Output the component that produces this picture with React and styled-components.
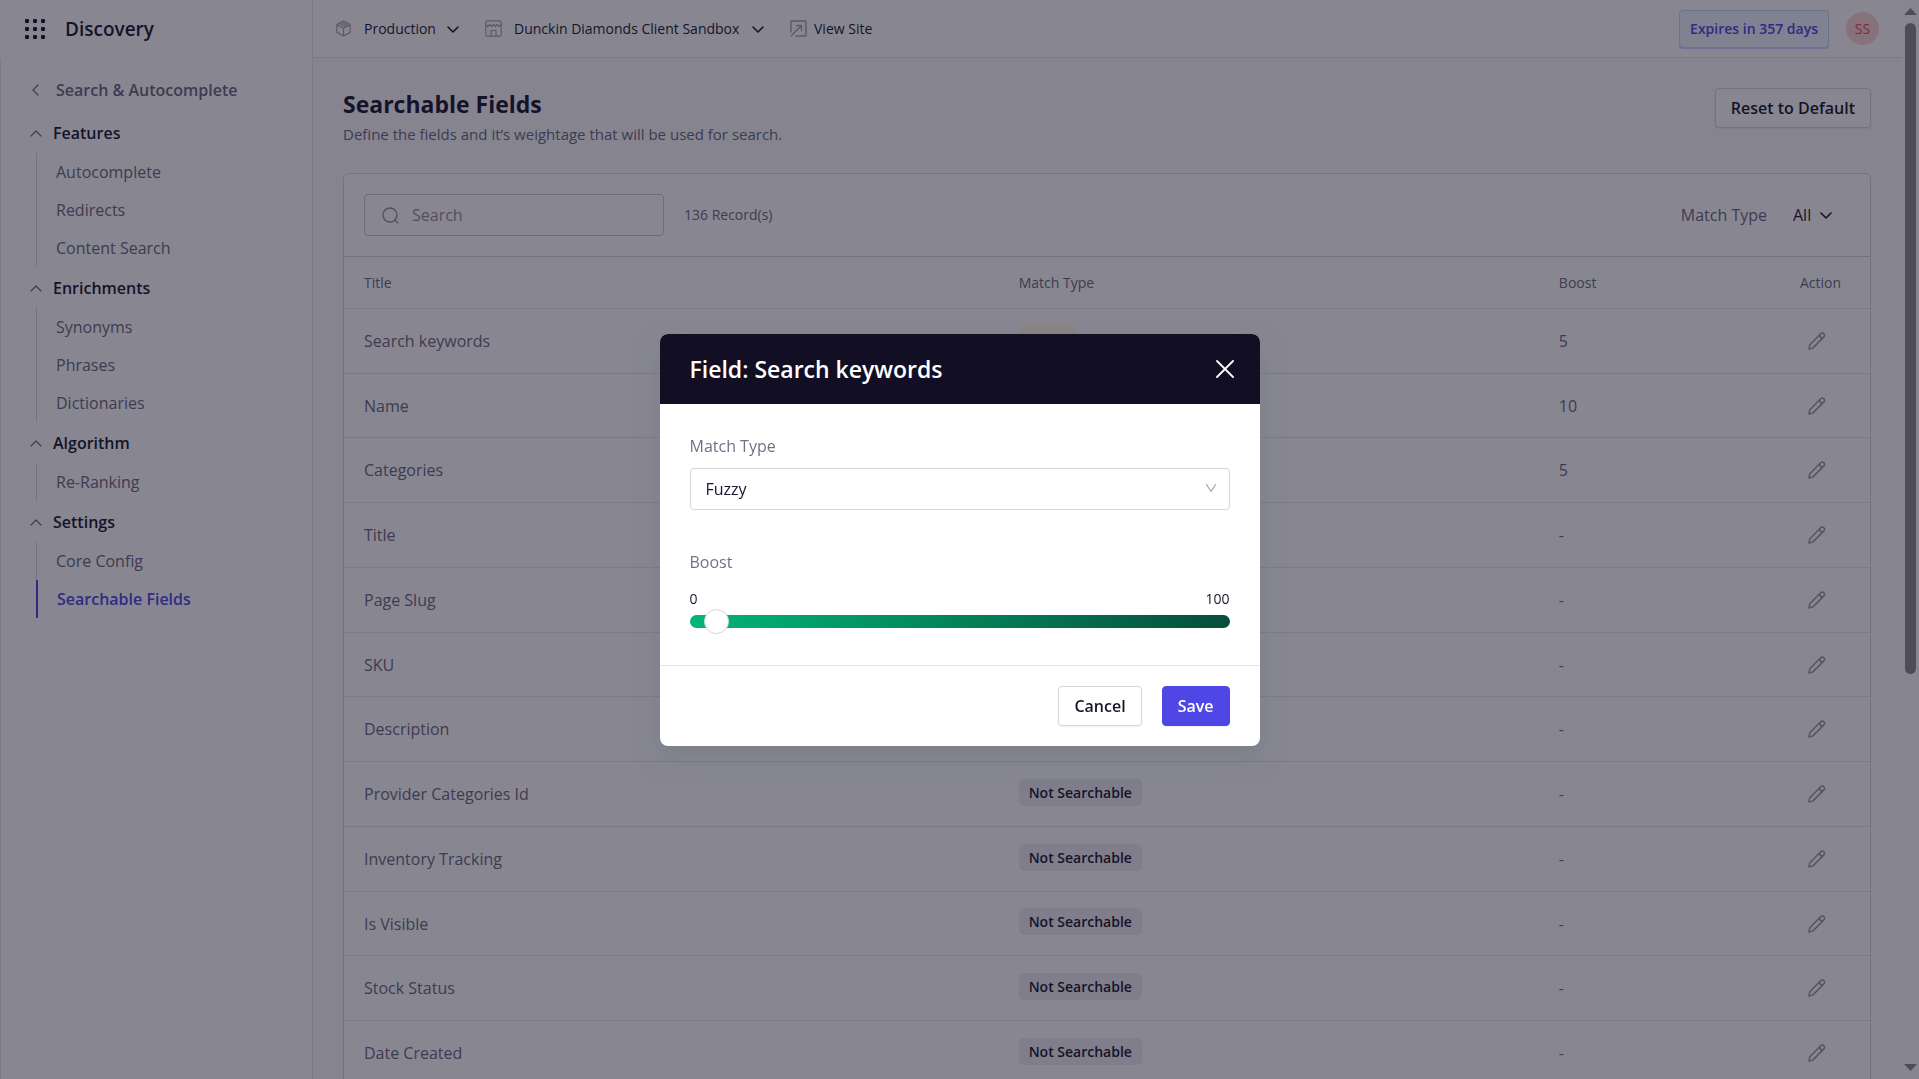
import React, { useState } from "react";
import styled, { createGlobalStyle, css } from "styled-components";

const color = {
  ink: "#19152f",
  muted: "#6a6780",
  icon: "#a5a3b3",
  line: "#e7e5ee",
  border: "#d6d4df",
  brand: "#4f46e5",
  navy: "#120f24",
};

const GlobalStyle = createGlobalStyle`
  * { box-sizing: border-box; }
  body {
    margin: 0;
    overflow: hidden;
    color: ${color.ink};
    font-family: "Segoe UI", "Open Sans", "Noto Sans", sans-serif;
    font-size: 16px;
    line-height: 24px;
  }
  button, input, select { font: inherit; color: inherit; }
  h1, h2, p, ul { margin: 0; padding: 0; }
  ul { list-style: none; }
  a { color: inherit; text-decoration: none; }
  svg { display: block; flex: none; }
`;

const Page = styled.div`
  display: flex;
  height: 100vh;
  background: #fff;
`;

/* ---------- icons ---------- */

const Stroke = styled.svg.attrs({ fill: "none", stroke: "currentColor", strokeLinecap: "round", strokeLinejoin: "round" })`
  color: ${(p) => p.$color || "inherit"};
`;

const GridIcon = () => (
  <svg width="20" height="20" viewBox="0 0 20 20" fill="currentColor" aria-hidden="true">
    {[0, 8, 16].map((y) => [0, 8, 16].map((x) => (
      <rect key={`${x}-${y}`} x={x} y={y} width="4" height="4" rx="1" />
    )))}
  </svg>
);

const arrows = {
  down: "M1 4l5 5 5-5",
  up: "M1 9l5-5 5 5",
  left: "M8 1L3 6l5 5",
  deep: "M1.5 1.500l4.500 7 4.500-7",
};
const Arrow = ({ dir = "down", tone, weight = 1.5 }) => (
  <Stroke width="12" height="12" viewBox="0 0 12 12" strokeWidth={weight} $color={tone} aria-hidden="true">
    <path d={arrows[dir]} />
  </Stroke>
);

const BoxIcon = () => (
  <Stroke width="17" height="17" viewBox="0 0 17 17" strokeWidth="1.2" $color={color.icon} aria-hidden="true">
    <path d="M8.5 1l6.7 3.6v7.8L8.5 16l-6.7-3.6V4.6zM1.8 4.6l6.7 3.6 6.7-3.6M8.5 8.2V16M4.4 3.2l6.7 3.6M6.5 2.1l6.7 3.6" />
  </Stroke>
);

const StoreIcon = () => (
  <Stroke width="17" height="17" viewBox="0 0 17 17" strokeWidth="1.2" $color={color.icon} aria-hidden="true">
    <rect x="0.8" y="0.8" width="15.4" height="15.4" rx="1.5" />
    <path d="M0.8 4.5l2 2 2-2 1.8 2 1.9-2 1.9 2 1.8-2 2 2 2-2M6 16v-5.5h5V16" />
  </Stroke>
);

const ExternalIcon = () => (
  <Stroke width="17" height="17" viewBox="0 0 17 17" strokeWidth="1.4" $color={color.icon} aria-hidden="true">
    <path d="M1 12V1h15v15H6M1.2 15.8L11.5 5.5M6.5 5.5h5v5" />
  </Stroke>
);

const SearchIcon = () => (
  <Stroke width="17" height="17" viewBox="0 0 17 17" strokeWidth="1.3" $color="#8f8ca0" aria-hidden="true">
    <circle cx="8" cy="8" r="7" />
    <path d="M13 13l2.6 2.8" />
  </Stroke>
);

const PencilIcon = () => (
  <Stroke width="18" height="18" viewBox="0 0 18 18" strokeWidth="1.5" $color="#9896a7" aria-hidden="true">
    <path d="M1 17l0.7-4L12.6 1.8a2.1 2.1 0 0 1 3.3 0 2.1 2.1 0 0 1 0 3.1L5 15.9zM11.9 3.1a2.4 2.4 0 0 0 2.9 2.9" />
  </Stroke>
);

const CloseIcon = () => (
  <Stroke width="18" height="18" viewBox="0 0 18 18" strokeWidth="1.8" aria-hidden="true">
    <path d="M1 1l16 16M17 1L1 17" />
  </Stroke>
);

/* ---------- shared controls ---------- */

const SelectWrap = styled.span`
  display: inline-grid;
  align-items: center;
  > * { grid-area: 1 / 1; }
  > svg { justify-self: end; pointer-events: none; margin-right: ${(p) => (p.$boxed ? 13 : 0)}px; }
`;

const NativeSelect = styled.select`
  appearance: none;
  border: 0;
  margin: 0;
  background: transparent;
  padding: 0 ${(p) => p.$room || 22}px 0 0;
  font-size: ${(p) => p.$size || 16}px;
  line-height: 24px;
  ${(p) => p.$boxed && css`
    width: 100%;
    height: 42px;
    padding: 0 40px 0 15px;
    border: 1px solid ${color.border};
    border-radius: 4px;
    background: #fff;
  `}
`;

const Button = styled.button`
  height: 40px;
  padding: 0 15px;
  font-weight: 600;
  line-height: 24px;
  border-radius: 4px;
  border: 1px solid ${(p) => (p.$primary ? color.brand : color.border)};
  background: ${(p) => (p.$primary ? color.brand : "#fff")};
  color: ${(p) => (p.$primary ? "#fff" : color.ink)};
  box-shadow: 0 1px 2px rgba(0, 0, 0, 0.06);
  white-space: nowrap;
`;

const IconButton = styled.button`
  display: inline-flex;
  padding: ${(p) => p.$pad || 0}px;
  border: 0;
  background: none;
  color: inherit;
`;

/* ---------- sidebar ---------- */

const Sidebar = styled.aside`
  display: flex;
  flex-direction: column;
  flex: none;
  width: 313px;
  border-right: 1px solid ${color.line};
`;

const Brand = styled.div`
  display: flex;
  align-items: center;
  gap: 20px;
  height: 58px;
  padding-left: 25px;
  font-size: 19px;
  font-weight: 600;
`;

const Nav = styled.nav`
  flex: 1;
  padding: 20px 0 0 29px;
  border-left: 1px solid ${color.line};
`;

const BackLink = styled.a`
  display: flex;
  align-items: center;
  gap: 14px;
  height: 24px;
  margin-bottom: 10px;
  font-weight: 600;
  color: ${color.muted};
`;

const GroupTitle = styled.button`
  display: flex;
  align-items: center;
  gap: 11px;
  height: 41px;
  padding: 0;
  border: 0;
  background: none;
  font-weight: 600;
  > svg { color: ${color.muted}; }
`;

const Group = styled.ul`
  margin-left: 6px;
`;

const NavItem = styled.a`
  display: flex;
  align-items: center;
  height: 38px;
  padding-left: 19px;
  border-left: 1px solid ${color.border};
  color: ${color.muted};
  ${(p) => p.$active && css`
    border-left: 2px solid ${color.brand};
    color: ${color.brand};
    font-weight: 600;
  `}
`;

/* ---------- main ---------- */

const Main = styled.main`
  display: flex;
  flex-direction: column;
  flex: 1;
  min-width: 0;
  background: #fafafa;
`;

const TopBar = styled.header`
  display: flex;
  align-items: center;
  justify-content: space-between;
  height: 58px;
  padding: 0 23px 0 22px;
  background: #fff;
  border-bottom: 1px solid ${color.line};
  flex: none;
`;

const TopGroup = styled.div`
  display: flex;
  align-items: center;
  gap: ${(p) => p.$gap}px;
  font-size: 14px;
`;

const TopLabel = styled.label`
  display: flex;
  align-items: center;
  gap: 12px;
`;

const TopLink = styled.a`
  display: flex;
  align-items: center;
  gap: 7px;
`;

const Expires = styled.button`
  height: 38px;
  padding: 0 10px;
  border: 1px solid #c7d2fe;
  border-radius: 4px;
  background: #eef2ff;
  box-shadow: 0 1px 0 #c7d2fe;
  color: ${color.brand};
  font-size: 14px;
  font-weight: 600;
`;

const Avatar = styled.button`
  width: 33px;
  height: 33px;
  padding: 0;
  border: 0;
  border-radius: 50%;
  background: #fdd4d4;
  color: #ef4458;
  font-size: 14px;
`;

const Content = styled.div`
  flex: 1;
  min-height: 0;
  overflow: hidden;
  padding: 30px 31px 0 30px;
`;

const Heading = styled.div`
  display: flex;
  align-items: flex-start;
  justify-content: space-between;
  margin-bottom: 28px;
  h1 { font-size: 23px; line-height: 32px; font-weight: 700; }
  p { margin-top: 3px; font-size: 15px; line-height: 22px; color: ${color.muted}; }
`;

const Card = styled.section`
  background: #fff;
  border: 1px solid ${color.border};
  border-radius: 6px;
`;

const Toolbar = styled.div`
  display: flex;
  align-items: center;
  gap: 20px;
  padding: 20px 38px 20px 20px;
  border-bottom: 1px solid ${color.border};
`;

const SearchBox = styled.label`
  display: flex;
  align-items: center;
  gap: 13px;
  width: 300px;
  height: 42px;
  padding: 0 17px;
  border: 1px solid #c9c7d3;
  border-radius: 4px;
  input {
    flex: 1;
    min-width: 0;
    padding: 0;
    border: 0;
    outline: 0;
    background: none;
  }
  input::placeholder { color: #918ea2; opacity: 1; }
`;

const Count = styled.span`
  font-size: 14px;
  color: ${color.muted};
`;

const Filter = styled.label`
  display: flex;
  align-items: center;
  gap: 26px;
  margin-left: auto;
  color: ${color.muted};
  select, svg { color: ${color.ink}; }
`;

const Table = styled.table`
  width: 100%;
  table-layout: fixed;
  border-collapse: separate;
  border-spacing: 0;
  color: ${color.muted};
  th, td {
    padding: 0 0 0 20px;
    border-bottom: 1px solid ${color.line};
    text-align: left;
    vertical-align: middle;
  }
  th { height: 52px; font-size: 14px; font-weight: 400; }
`;

const Col = styled.col`
  width: ${(p) => p.$width};
`;

const Row = styled.tr`
  td { height: 65px; }
  &:nth-child(4n + 2) td { height: 64px; }
`;

const badgeTones = {
  Fuzzy: { bg: "#fefae0", fg: "#d9650a" },
  "Not Searchable": { bg: "#efedf3", fg: color.ink },
};

const Badge = styled.span`
  display: inline-block;
  margin-bottom: 4px;
  padding: 2px 10px;
  border-radius: 5px;
  font-size: 14px;
  line-height: 23px;
  font-weight: 600;
  background: ${(p) => badgeTones[p.$tone].bg};
  color: ${(p) => badgeTones[p.$tone].fg};
`;

/* ---------- scrollbar ---------- */

const ScrollBar = styled.div`
  display: flex;
  flex-direction: column;
  align-items: center;
  flex: none;
  width: 17px;
  padding: 8px 0;
  background: #fcfcfc;
  color: #8b8b8b;
`;

const Rail = styled.div`
  flex: 1;
  width: 11px;
  margin: 8px 0;
`;

const Thumb = styled.div`
  height: 63%;
  border-radius: 6px;
  background: #8b8b8b;
`;

/* ---------- modal ---------- */

const Backdrop = styled.div`
  position: fixed;
  inset: 0;
  display: flex;
  align-items: center;
  justify-content: center;
  background: rgba(18, 15, 36, 0.5);
`;

const Dialog = styled.section`
  width: 600px;
  max-width: 100%;
  border-radius: 8px;
  overflow: hidden;
  background: #fff;
  box-shadow: 0 12px 28px rgba(100, 116, 126, 0.4);
`;

const DialogHead = styled.header`
  display: flex;
  align-items: center;
  justify-content: space-between;
  height: 70px;
  padding: 0 26px 0 30px;
  background: ${color.navy};
  color: #fff;
  h2 { font-size: 23px; line-height: 32px; font-weight: 600; }
`;

const DialogBody = styled.div`
  display: flex;
  flex-direction: column;
  gap: 40px;
  padding: 30px 30px 37px;
  border-bottom: 1px solid ${color.line};
`;

const Field = styled.div`
  display: flex;
  flex-direction: column;
  gap: ${(p) => p.$gap}px;
  > label { color: #737087; }
`;

const Scale = styled.div`
  display: flex;
  justify-content: space-between;
  margin-bottom: 4px;
  font-size: 14px;
  line-height: 24px;
`;

const Track = styled.div`
  height: 13px;
  border-radius: 7px;
  background: linear-gradient(90deg, #02b67a, #064e3b);
`;

const thumb = css`
  appearance: none;
  width: 25px;
  height: 25px;
  border: 1px solid ${color.border};
  border-radius: 50%;
  background: #fff;
`;

/* The input overhangs the track by half a thumb on each side, so the thumb's centre runs from end to end. */
const Range = styled.input`
  appearance: none;
  width: calc(100% + 24px);
  height: 25px;
  margin: -6px -12px;
  background: transparent;
  &::-webkit-slider-thumb { ${thumb} }
  &::-moz-range-thumb { ${thumb} }
`;

const RangeHolder = styled.div`
  display: grid;
  align-items: center;
  height: 13px;
  > * { grid-area: 1 / 1; }
`;

const DialogFoot = styled.footer`
  display: flex;
  justify-content: flex-end;
  gap: 20px;
  padding: 20px 30px;
`;

/* ---------- data ---------- */

const groups = [
  { title: "Features", items: ["Autocomplete", "Redirects", "Content Search"] },
  { title: "Enrichments", items: ["Synonyms", "Phrases", "Dictionaries"] },
  { title: "Algorithm", items: ["Re-Ranking"] },
  { title: "Settings", items: ["Core Config", "Searchable Fields"] },
];

const none = "Not Searchable";
const fields = [
  ["Search keywords", "Fuzzy", "5"],
  ["Name", "Fuzzy", "10"],
  ["Categories", "Fuzzy", "5"],
  ["Title", none, "-"],
  ["Page Slug", none, "-"],
  ["SKU", none, "-"],
  ["Description", none, "-"],
  ["Provider Categories Id", none, "-"],
  ["Inventory Tracking", none, "-"],
  ["Is Visible", none, "-"],
  ["Stock Status", none, "-"],
  ["Date Created", none, "-"],
];

function Select({ id, options, boxed, size, room }) {
  return (
    <SelectWrap $boxed={boxed}>
      <NativeSelect id={id} $boxed={boxed} $size={size} $room={room}>
        {options.map((o) => <option key={o}>{o}</option>)}
      </NativeSelect>
      <Arrow dir={boxed ? "deep" : "down"} tone={boxed ? "#a09db0" : undefined} weight={boxed ? 1.1 : 1.6} />
    </SelectWrap>
  );
}

function EditDialog() {
  const [boost, setBoost] = useState(5);
  return (
    <Backdrop>
      <Dialog role="dialog" aria-modal="true" aria-labelledby="dialog-title">
        <DialogHead>
          <h2 id="dialog-title">Field: Search keywords</h2>
          <IconButton type="button" aria-label="Close"><CloseIcon /></IconButton>
        </DialogHead>
        <DialogBody>
          <Field $gap={10}>
            <label htmlFor="match-type">Match Type</label>
            <Select id="match-type" boxed options={["Fuzzy"]} />
          </Field>
          <Field $gap={13}>
            <label htmlFor="boost">Boost</label>
            <div>
              <Scale><span>0</span><span>100</span></Scale>
              <RangeHolder>
                <Track />
                <Range id="boost" type="range" min="0" max="100" value={boost} onChange={(e) => setBoost(Number(e.target.value))} />
              </RangeHolder>
            </div>
          </Field>
        </DialogBody>
        <DialogFoot>
          <Button type="button">Cancel</Button>
          <Button type="button" $primary>Save</Button>
        </DialogFoot>
      </Dialog>
    </Backdrop>
  );
}

export default function App() {
  return (
    <>
      <GlobalStyle />
      <Page>
        <Sidebar>
          <Brand>
            <IconButton type="button" aria-label="Apps"><GridIcon /></IconButton>
            Discovery
          </Brand>
          <Nav>
            <BackLink href="#back"><Arrow dir="left" weight={1.2} />Search &amp; Autocomplete</BackLink>
            {groups.map((g) => (
              <div key={g.title}>
                <GroupTitle type="button"><Arrow dir="up" weight={1.2} />{g.title}</GroupTitle>
                <Group>
                  {g.items.map((item) => (
                    <li key={item}>
                      <NavItem href="#item" $active={item === "Searchable Fields"}>{item}</NavItem>
                    </li>
                  ))}
                </Group>
              </div>
            ))}
          </Nav>
        </Sidebar>

        <Main>
          <TopBar>
            <TopGroup $gap={26}>
              <TopLabel aria-label="Environment"><BoxIcon /><Select size={14} options={["Production"]} room={23} /></TopLabel>
              <TopLabel aria-label="Store"><StoreIcon /><Select size={14} options={["Dunckin Diamonds Client Sandbox"]} room={24} /></TopLabel>
              <TopLink href="#site"><ExternalIcon />View Site</TopLink>
            </TopGroup>
            <TopGroup $gap={17}>
              <Expires type="button">Expires in 357 days</Expires>
              <Avatar type="button">SS</Avatar>
            </TopGroup>
          </TopBar>

          <Content>
            <Heading>
              <div>
                <h1>Searchable Fields</h1>
                <p>Define the fields and it’s weightage that will be used for search.</p>
              </div>
              <Button type="button">Reset to Default</Button>
            </Heading>

            <Card>
              <Toolbar>
                <SearchBox><SearchIcon /><input type="search" placeholder="Search" aria-label="Search" /></SearchBox>
                <Count>136 Record(s)</Count>
                <Filter>Match Type<Select options={["All"]} room={20} /></Filter>
              </Toolbar>
              <Table>
                <colgroup>
                  <Col $width="42.9%" />
                  <Col $width="35.4%" />
                  <Col $width="15.8%" />
                  <Col />
                </colgroup>
                <thead>
                  <tr><th>Title</th><th>Match Type</th><th>Boost</th><th>Action</th></tr>
                </thead>
                <tbody>
                  {fields.map(([name, type, boost]) => (
                    <Row key={name}>
                      <td>{name}</td>
                      <td><Badge $tone={type}>{type}</Badge></td>
                      <td>{boost}</td>
                      <td><IconButton type="button" $pad={8} aria-label={`Edit ${name}`}><PencilIcon /></IconButton></td>
                    </Row>
                  ))}
                </tbody>
              </Table>
            </Card>
          </Content>
        </Main>

        <ScrollBar aria-hidden="true">
          <svg width="13" height="7" viewBox="0 0 13 7" fill="currentColor"><path d="M6.5 0L13 7H0z" /></svg>
          <Rail><Thumb /></Rail>
          <svg width="13" height="7" viewBox="0 0 13 7" fill="currentColor"><path d="M0 0h13L6.5 7z" /></svg>
        </ScrollBar>
      </Page>
      <EditDialog />
    </>
  );
}
